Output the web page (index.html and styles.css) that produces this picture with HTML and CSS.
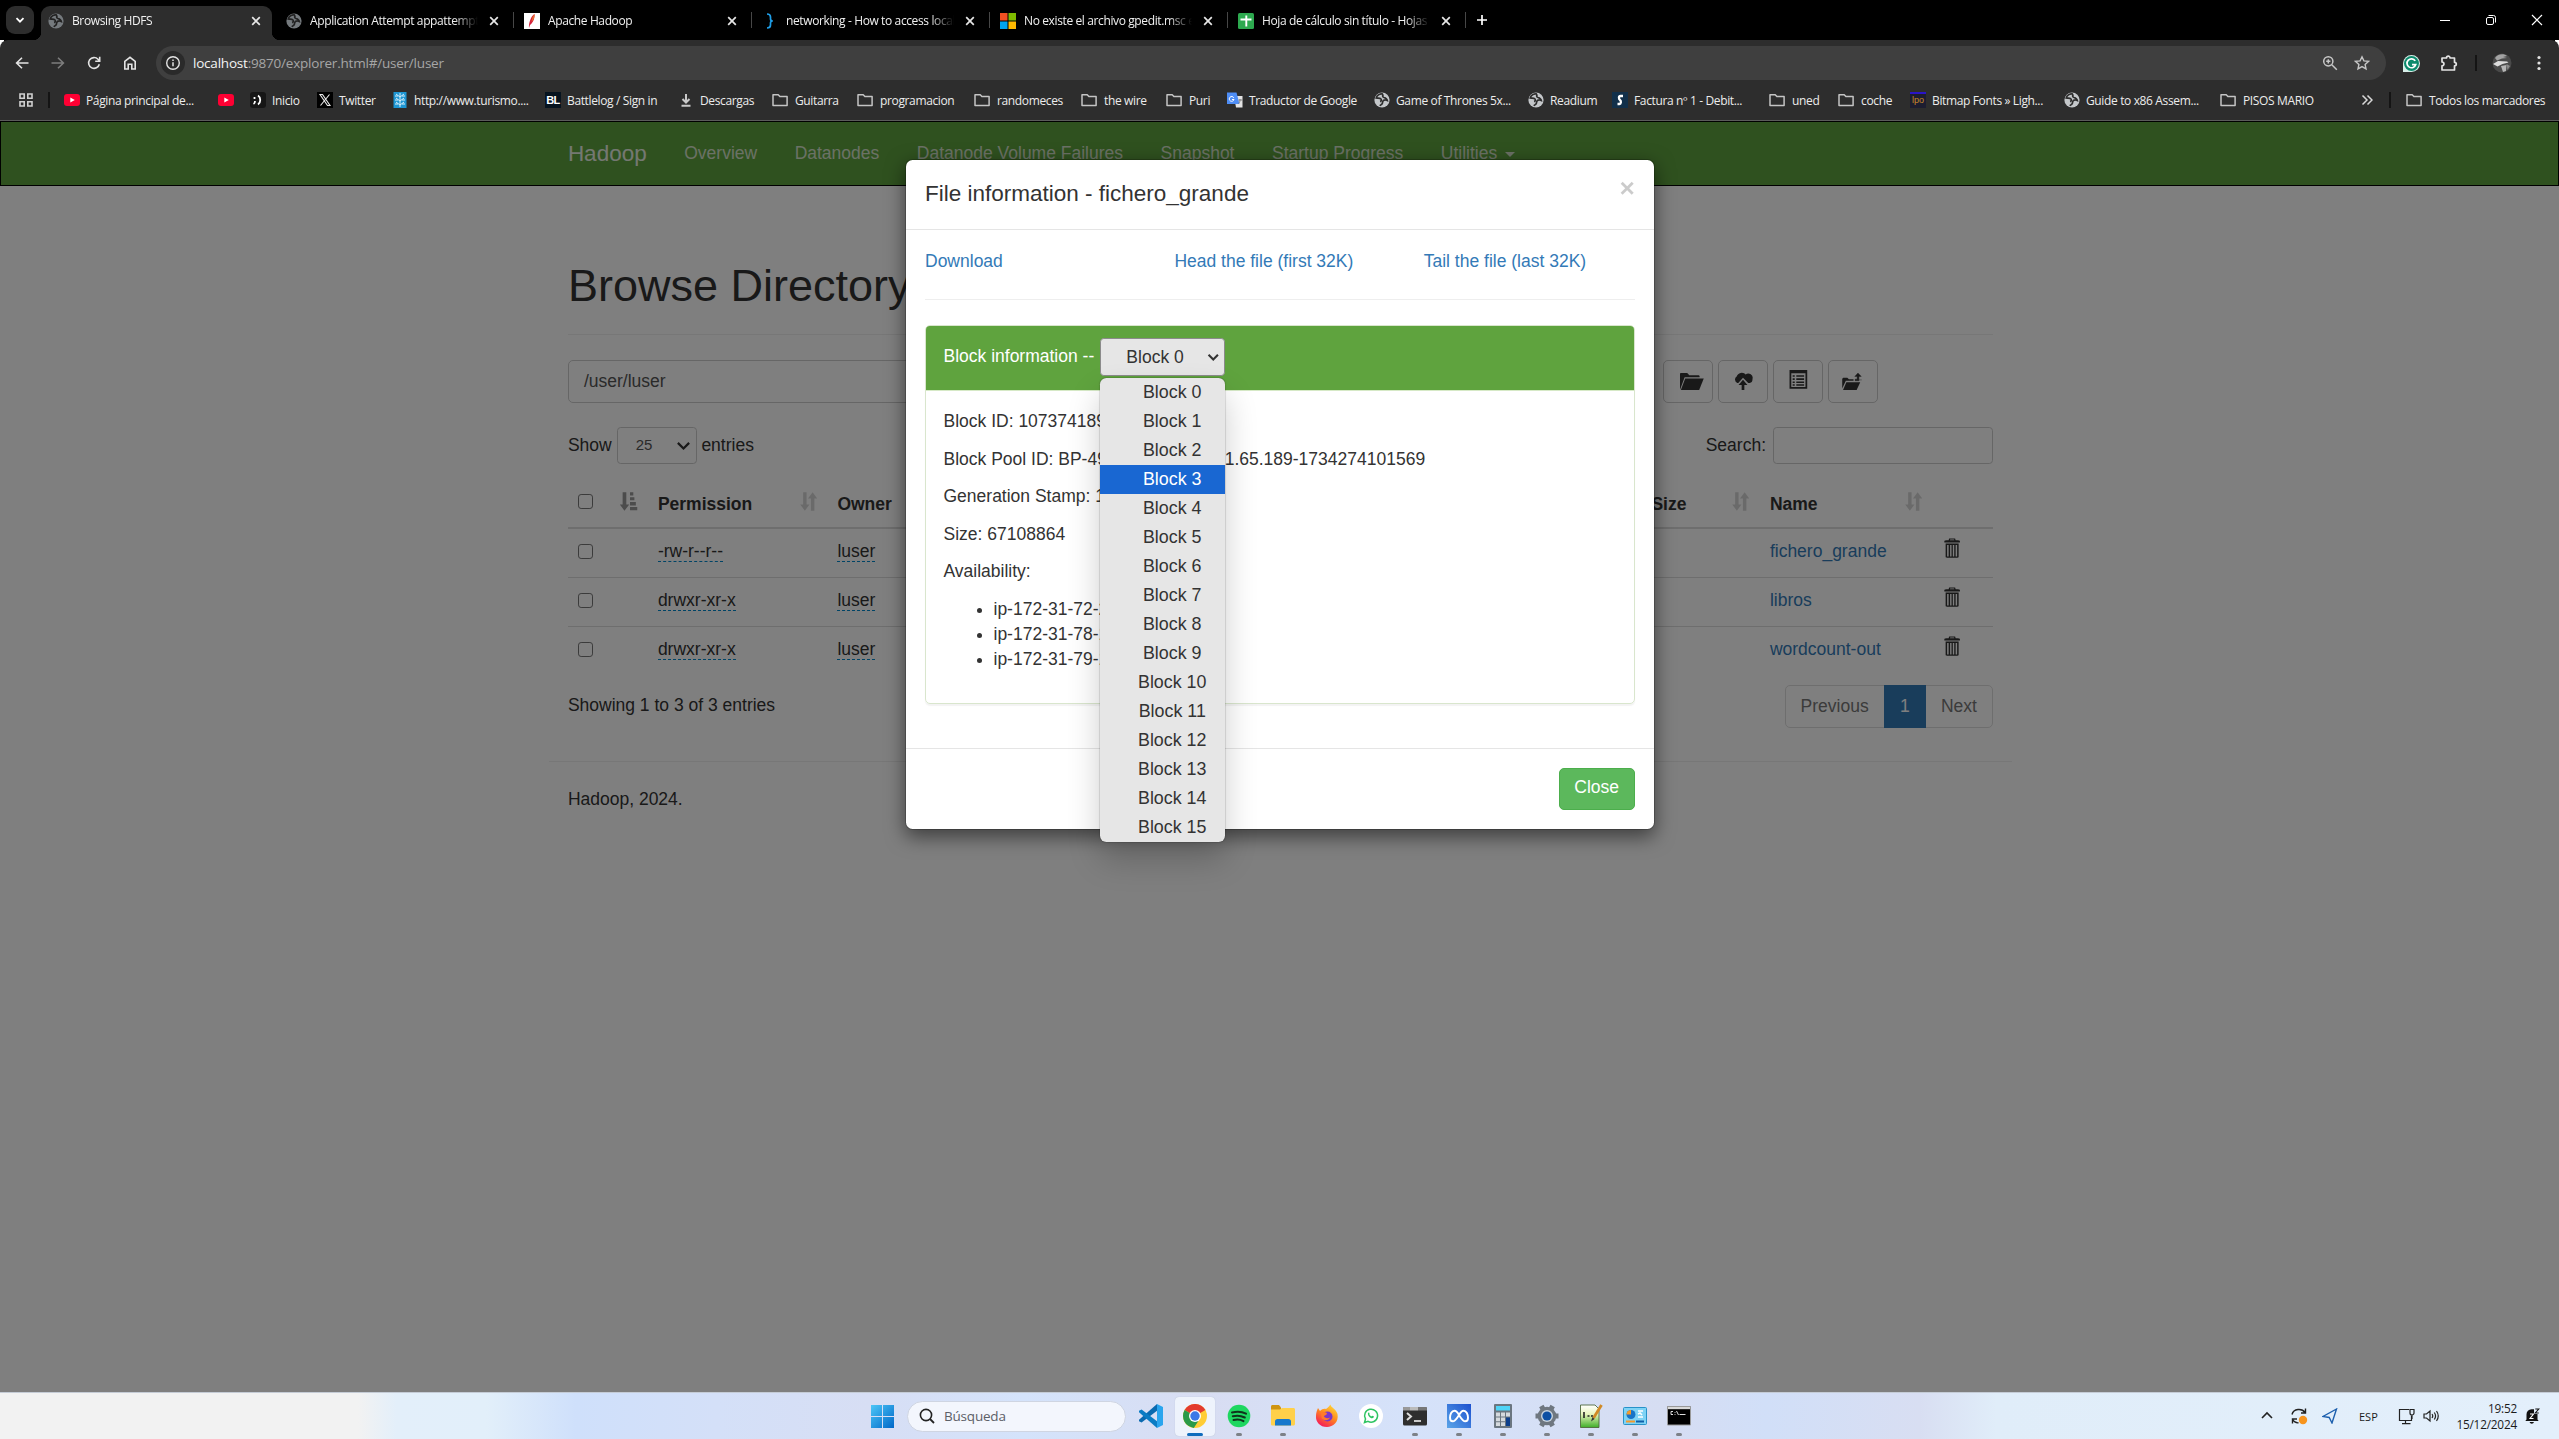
FILE: index.html
```html
<!DOCTYPE html>
<html lang="es">
<head>
<meta charset="utf-8">
<title>Browsing HDFS</title>
<link rel="stylesheet" href="styles.css">
</head>
<body>
<svg class="defs" width="0" height="0">
  <defs>
    <linearGradient id="gWin" x1="0" y1="0" x2="1" y2="1"><stop offset="0" stop-color="#4cc6f7"/><stop offset="1" stop-color="#0067c8"/></linearGradient>
    <linearGradient id="gFire" x1=".9" y1="0" x2=".3" y2="1"><stop offset="0" stop-color="#ffe43c"/><stop offset=".5" stop-color="#ff8a1d"/><stop offset="1" stop-color="#f5195a"/></linearGradient>
    <linearGradient id="gMeta" x1="0" y1="1" x2="1" y2="0"><stop offset="0" stop-color="#5aa4e8"/><stop offset="1" stop-color="#1c50cf"/></linearGradient>
    <linearGradient id="gNote" x1="0" y1="0" x2="0" y2="1"><stop offset="0" stop-color="#fff"/><stop offset=".4" stop-color="#e9f5bd"/><stop offset="1" stop-color="#3fae29"/></linearGradient>
  </defs>
  <symbol id="close" viewBox="0 0 16 16"><path d="M4.2 4.2l7.6 7.6M11.8 4.2l-7.6 7.6" stroke="#e6e6e6" stroke-width="1.7" fill="none"/></symbol>
  <symbol id="globe" viewBox="0 0 16 16"><circle cx="8" cy="8" r="7.6" fill="currentColor"/><path d="M9 2C6 1.500 3 3.200 2.200 6c1.800.4 3.600-.2 4.800 1 .8 1 .2 2.200-.9 2.600M9.500 2.500C8 3.500 8.500 5 10 5.500c1.500.4 3 1.200 3.300 3-1.300-.6-3.300-.6-4.300.5-.7 1-.2 2-1 3-.6.800-1.600 1-2.200 1.800" fill="none" stroke="var(--cut)" stroke-width="1.700"/></symbol>
  <symbol id="folder" viewBox="0 0 16 16"><path d="M1 13.4V2.7h5.2l1.7 1.9h7.2v8.8z" fill="none" stroke="#c4c4c4" stroke-width="1.5" stroke-linejoin="round"/></symbol>
  <symbol id="yt" viewBox="0 0 16 16"><rect y="2" width="16" height="12" rx="3" fill="#f03"/><path d="M6.3 5.5v5L10.8 8z" fill="#fff"/></symbol>
  <symbol id="sort" viewBox="0 0 18 20"><path d="M3.2 0h3.6v12.5h3L5 19 .2 12.5h3zM11.2 19h3.6V6.500h3L13 0 8.200 6.500h3z" fill="currentColor"/></symbol>
  <symbol id="sortasc" viewBox="0 0 18 20"><path d="M2.700 0h3.800v12.500h3L4.600 19-.3 12.500h3zM10.300 0h3.400v3.300h-3.400zM10.300 5h4.500v3.300h-4.500zM10.300 10h6v3.600h-6zM10.300 15.200h7.700v3.300h-7.700z" fill="currentColor"/></symbol>
  <symbol id="trash" viewBox="0 0 16 20"><path d="M.2 3.200C.2 2.500 1 2.200 4.500 2.200L5 .4h6l.5 1.800c3.500 0 4.300.3 4.300 1v1.300H.2zM1.500 5.500h13V18.600c0 .8-.4 1.200-1.200 1.200H2.700c-.8 0-1.200-.4-1.200-1.200zM3 7v11.400h1.500V7zM6 7v11.400h1.400V7zM8.700 7v11.400h1.400V7zM11.500 7v11.400H13V7zM5.800 2.200h4.400l-.3-.8H6.100z" fill="#333" fill-rule="evenodd"/></symbol>
</svg>

<div class="window">
  <header class="tabstrip">
    <div class="tabsearch"><svg width="12" height="12" viewBox="0 0 12 12"><path d="M2.500 4.200L6 7.700l3.500-3.500" fill="none" stroke="#fff" stroke-width="1.800"/></svg></div>
    <div class="tab active"><svg class="fav dimglobe"><use href="#globe"/></svg><span class="ttl">Browsing HDFS</span><svg class="x"><use href="#close"/></svg></div>
    <div class="tab nosep"><svg class="fav dimglobe"><use href="#globe"/></svg><span class="ttl">Application Attempt appattempt_17</span><svg class="x"><use href="#close"/></svg></div>
    <div class="tab"><svg class="fav" viewBox="0 0 16 16"><path d="M0 0h16v16H0z" fill="#fff"/><path d="M5 15C4.500 10 7 3 10.500 1 11 6 8.500 10 6 12z" fill="#d4213d"/><path d="M7.500 9C8 5 9 2.500 10.500 1c.5 3-1 6-3 8z" fill="#e8722c"/></svg><span class="ttl">Apache Hadoop</span><svg class="x"><use href="#close"/></svg></div>
    <div class="tab"><svg class="fav" viewBox="0 0 16 16"><path d="M5 1c3 0 3.500 1 3.500 3v2c0 1.300.8 2 2.300 2-1.500 0-2.300.7-2.300 2v2c0 2-.5 3-3.500 3" fill="none" stroke="#1f9fe8" stroke-width="1.700"/></svg><span class="ttl">networking - How to access localhost</span><svg class="x"><use href="#close"/></svg></div>
    <div class="tab"><svg class="fav" viewBox="0 0 16 16"><path d="M0 0h7.500v7.500H0z" fill="#f25022"/><path d="M8.500 0H16v7.500H8.500z" fill="#7fba00"/><path d="M0 8.500h7.500V16H0z" fill="#00a4ef"/><path d="M8.500 8.500H16V16H8.500z" fill="#ffb900"/></svg><span class="ttl">No existe el archivo gpedit.msc en</span><svg class="x"><use href="#close"/></svg></div>
    <div class="tab"><svg class="fav" viewBox="0 0 16 16"><rect width="16" height="16" rx="1.500" fill="#2da94f"/><path d="M8.300 2.500v11M2.500 6.500h11" stroke="#fff" stroke-width="1.900"/></svg><span class="ttl">Hoja de cálculo sin título - Hojas de</span><svg class="x"><use href="#close"/></svg></div>
    <div class="newtab"><svg width="14" height="14" viewBox="0 0 14 14"><path d="M7 2v10M2 7h10" stroke="#fff" stroke-width="1.700"/></svg></div>
    <div class="winctl">
      <svg width="46" height="40" viewBox="0 0 46 40"><path d="M18 20.500h10" stroke="#fff"/></svg>
      <svg width="46" height="40" viewBox="0 0 46 40"><rect x="18.500" y="17.500" width="7" height="7" rx="1.500" fill="none" stroke="#fff"/><path d="M20.500 15.500h5a2 2 0 0 1 2 2v5" fill="none" stroke="#fff"/></svg>
      <svg width="46" height="40" viewBox="0 0 46 40"><path d="M18 15l10 10M28 15L18 25" stroke="#fff" stroke-width="1.200"/></svg>
    </div>
  </header>

  <div class="toolbar">
    <svg class="nav" viewBox="0 0 16 16"><path d="M14.500 8H3M8 2.700L2.600 8 8 13.300" fill="none" stroke="#e3e3e3" stroke-width="1.600"/></svg>
    <svg class="nav" viewBox="0 0 16 16"><path d="M1.500 8H13M8 2.700L13.400 8 8 13.300" fill="none" stroke="#7d7d7d" stroke-width="1.600"/></svg>
    <svg class="nav" viewBox="0 0 16 16"><path d="M13.300 9.200A5.400 5.400 0 1 1 12 4.300L13.500 6M13.700 1.800v4.500H9.200" fill="none" stroke="#e3e3e3" stroke-width="1.600"/></svg>
    <svg class="nav" viewBox="0 0 16 16"><path d="M2.800 14V6.500L8 2.300l5.200 4.200V14H9.800V9.300H6.200V14z" fill="none" stroke="#e3e3e3" stroke-width="1.600"/></svg>
    <div class="omnibox">
      <span class="siteinfo"><svg width="16" height="16" viewBox="0 0 16 16"><circle cx="8" cy="8" r="6.300" fill="none" stroke="#e3e3e3" stroke-width="1.400"/><path d="M8 7.200v4.100M8 4.600v1.500" stroke="#e3e3e3" stroke-width="1.500"/></svg></span>
      <span class="url"><b>localhost</b>:9870/explorer.html#/user/luser</span>
      <svg class="oicon" viewBox="0 0 16 16"><circle cx="6.300" cy="6.300" r="4.600" fill="none" stroke="#c7c7c7" stroke-width="1.500"/><path d="M9.800 9.800l5 5M6.300 4.200v4.200M4.200 6.300h4.200" stroke="#c7c7c7" stroke-width="1.500"/></svg>
      <svg class="oicon" viewBox="0 0 16 16"><path d="M8 1.800l1.900 4.100 4.500.5-3.300 3 .9 4.500L8 11.600l-4 2.300.9-4.500-3.300-3 4.500-.5z" fill="none" stroke="#c7c7c7" stroke-width="1.400"/></svg>
    </div>
    <svg class="gram" viewBox="0 0 16 16"><path d="M8 0a8 8 0 1 1 0 16H0V8a8 8 0 0 1 8-8z" fill="#d8efe9"/><circle cx="8" cy="8" r="7" fill="#0c8a6c"/><path d="M11.500 5.500A4.200 4.200 0 1 0 12 9H8.500" fill="none" stroke="#fff" stroke-width="1.600"/></svg>
    <svg class="puzzle" viewBox="0 0 18 18"><path d="M2 4h4.500a1.800 1.800 0 0 1 3.600 0H14.500v4.300a1.800 1.800 0 0 1 0 3.600V16H2v-4.200c2.600 0 2.600-3.800 0-3.800z" fill="none" stroke="#e3e3e3" stroke-width="1.700" stroke-linejoin="round"/></svg>
    <i class="vline"></i>
    <svg class="avatar" viewBox="0 0 20 20"><circle cx="10" cy="10" r="9.500" fill="#4a4a4a"/><path d="M3 5c2-4 9-5 12-2l-4 1 4 1-5 .5-5 2z" fill="#a3a3a3"/><path d="M1 11l5-3 9 .5 1.500 1-6 1.500-5 2.500z" fill="#dcdcdc"/><path d="M9 13l2 6 3-1 .5-6z" fill="#b5b5b5"/><path d="M14.500 11l1 6 2.500-4z" fill="#8a8a8a"/></svg>
    <svg class="dots" viewBox="0 0 4 16"><circle cx="2" cy="2.500" r="1.600" fill="#e3e3e3"/><circle cx="2" cy="8" r="1.600" fill="#e3e3e3"/><circle cx="2" cy="13.500" r="1.600" fill="#e3e3e3"/></svg>
  </div>

  <nav class="bookmarks">
    <svg class="apps" viewBox="0 0 14 14"><path d="M1 1h4.200v4.200H1zM8.800 1H13v4.200H8.800zM1 8.800h4.200V13H1zM8.800 8.800H13V13H8.800z" fill="none" stroke="#d0d0d0" stroke-width="1.600"/></svg>
    <i class="vline"></i>
    <a style="width:154px"><svg><use href="#yt"/></svg>Página principal de...</a>
    <a style="width:32px"><svg><use href="#yt"/></svg></a>
    <a style="width:67px"><svg viewBox="0 0 16 16"><rect width="16" height="16" rx="3" fill="#161616"/><path d="M4.500 5v2M5 9c0 2-.5 2.500-1.500 3M8 3.500c3 2 3 7 0 9" stroke="#fff" stroke-width="1.800" fill="none"/></svg>Inicio</a>
    <a style="width:75px"><svg viewBox="0 0 16 16"><path d="M0 0h16v16H0z" fill="#000"/><path d="M3 2.500h2.500l7.500 11h-2.500zM12.500 2.500L3.500 13.500" fill="none" stroke="#e8e8e8" stroke-width="1.100"/></svg>Twitter</a>
    <a style="width:153px"><svg viewBox="0 0 16 16"><path d="M1.500 0h13v16h-13z" fill="#1e96d3"/><path d="M8 1v14M3 4h3M10 4h3M3 8h3M10 8h3M3 12h3M10 12h3M4 2l4 3 4-3M4 6l4 3 4-3M4 10l4 3 4-3" stroke="#d5effb" stroke-width="1" fill="none"/></svg>http://www.turismo....</a>
    <a style="width:133px"><span class="bl">BL</span>Battlelog / Sign in</a>
    <a style="width:94px"><svg viewBox="0 0 16 16"><path d="M8 2v8M4.500 7L8 10.500 11.500 7M3.500 13.700h9" fill="none" stroke="#c9c9c9" stroke-width="2"/></svg>Descargas</a>
    <a class="f" style="width:85px"><svg><use href="#folder"/></svg>Guitarra</a>
    <a class="f" style="width:117px"><svg><use href="#folder"/></svg>programacion</a>
    <a class="f" style="width:107px"><svg><use href="#folder"/></svg>randomeces</a>
    <a class="f" style="width:85px"><svg><use href="#folder"/></svg>the wire</a>
    <a class="f" style="width:61px"><svg><use href="#folder"/></svg>Puri</a>
    <a style="width:147px"><svg viewBox="0 0 16 16"><path d="M7 4h8.500v11.500H9z" fill="#e3e3e3"/><path d="M0 .5h9.500l3 11.500H0z" fill="#4e8df5"/><path d="M6.800 5.800A2.400 2.400 0 1 0 7 7.500H5" stroke="#fff" fill="none"/><path d="M11.500 8h4M13 7v1c0 2-1 3-1.500 3.500" stroke="#777" stroke-width=".9" fill="none"/></svg>Traductor de Google</a>
    <a style="width:154px"><svg class="ltglobe"><use href="#globe"/></svg>Game of Thrones 5x...</a>
    <a style="width:84px"><svg class="ltglobe"><use href="#globe"/></svg>Readium</a>
    <a style="width:157px"><svg viewBox="0 0 16 16"><path d="M0 0h16v16H0z" fill="#12304a"/><path d="M11 4H8.500C6.500 4 6.500 7 8 8s1 4-.5 4H5.500" fill="none" stroke="#fff" stroke-width="2.300"/></svg>Factura nº 1 - Debit...</a>
    <a class="f" style="width:69px"><svg><use href="#folder"/></svg>uned</a>
    <a class="f" style="width:72px"><svg><use href="#folder"/></svg>coche</a>
    <a style="width:154px"><span class="lpo">lpo</span>Bitmap Fonts » Ligh...</a>
    <a style="width:156px"><svg class="ltglobe"><use href="#globe"/></svg>Guide to x86 Assem...</a>
    <a class="f" style="width:140px"><svg><use href="#folder"/></svg>PISOS MARIO</a>
    <svg class="more" viewBox="0 0 12 12"><path d="M1.500 1.500L6 6l-4.500 4.500M6.500 1.500L11 6l-4.500 4.500" fill="none" stroke="#d8d8d8" stroke-width="1.500"/></svg>
    <i class="vline"></i>
    <a class="f"><svg><use href="#folder"/></svg>Todos los marcadores</a>
  </nav>

  <main class="viewport">
    <div class="page">
      <nav class="navbar"><div class="container navrow">
        <a class="brand">Hadoop</a><a>Overview</a><a>Datanodes</a><a>Datanode Volume Failures</a><a>Snapshot</a><a>Startup Progress</a><a>Utilities <i class="caret"></i></a>
      </div></nav>
      <div class="container">
        <div class="page-header"><h1>Browse Directory</h1></div>
        <div class="pathrow">
          <div class="path">/user/luser</div>
          <div class="btns">
            <button class="b1"><svg width="19" height="15" viewBox="0 0 23 18"><path d="M0 17V1.800C0 1 .5.900 1 .900L7 .900 9 3h8.500C18.500 3 19 3.500 19 4.300V5H4.500z" fill="#333"/><path d="M5 6.200h18L18.500 17.500H.8z" fill="#333"/></svg></button>
            <button class="b2"><svg width="16" height="15" viewBox="0 0 19 18"><path d="M4 10.500A3.600 3.600 0 0 1 3.400 4.200 5.200 5.200 0 0 1 12 2.300a4.200 4.200 0 0 1 6.600 4.500c.2 2-.9 3.700-2.600 3.700h-1.500L9.500 5.500 5 10.500z" fill="#333"/><path d="M9.500 7.500l4.300 5h-3V18H8.200v-5.500h-3z" fill="#333"/></svg></button>
            <button class="b3"><svg width="15" height="15" viewBox="0 0 17 18"><path d="M0 0h17v18H0zM1.700 3.200v13.100h13.600V3.200zM3 5h2v1.500H3zM6.500 5h7.500v1.500H6.500zM3 8h2v1.500H3zM6.500 8h7.500v1.500H6.500zM3 11h2v1.500H3zM6.500 11h7.500v1.500H6.500zM3 13.700h2v1.300H3zM6.500 13.700h7.500v1.300H6.500z" fill="#333" fill-rule="evenodd"/></svg></button>
            <button class="b4"><svg width="16" height="14" viewBox="0 0 19 17"><path d="M0 15V5.500L1 4.500h4L6.500 6H11v1.500H3.500zM4 9h13.500L14 16.500H.8z" fill="#333"/><path d="M15.300 0L18.500 3.300H16.200V7.500H12.500V6h2V3.300h-2.300zM16 6.700h3" fill="#333" stroke="#333" stroke-width=".4"/></svg></button>
          </div>
        </div>
        <div class="controls">
          <div class="left">Show <span class="sel25">25<svg width="12" height="8" viewBox="0 0 12 8"><path d="M1.500 1.500L6 6l4.500-4.500" fill="none" stroke="#333" stroke-width="1.800"/></svg></span> entries</div>
          <div class="right">Search:<input class="search"></div>
        </div>
        <table class="files">
          <colgroup><col class="c1"><col class="c2"><col class="c3"><col class="c4"><col class="c5"><col></colgroup>
          <thead><tr>
            <th><input type="checkbox"><svg class="sic on"><use href="#sortasc"/></svg></th>
            <th>Permission<svg class="sic"><use href="#sort"/></svg></th>
            <th>Owner</th>
            <th>Block Size<svg class="sic"><use href="#sort"/></svg></th>
            <th>Name<svg class="sic"><use href="#sort"/></svg></th>
            <th></th>
          </tr></thead>
          <tbody>
            <tr><td><input type="checkbox"></td><td><span class="ed">-rw-r--r--</span></td><td><span class="ed">luser</span></td><td></td><td><a>fichero_grande</a></td><td><svg class="tr"><use href="#trash"/></svg></td></tr>
            <tr><td><input type="checkbox"></td><td><span class="ed">drwxr-xr-x</span></td><td><span class="ed">luser</span></td><td></td><td><a>libros</a></td><td><svg class="tr"><use href="#trash"/></svg></td></tr>
            <tr><td><input type="checkbox"></td><td><span class="ed">drwxr-xr-x</span></td><td><span class="ed">luser</span></td><td></td><td><a>wordcount-out</a></td><td><svg class="tr"><use href="#trash"/></svg></td></tr>
          </tbody>
        </table>
        <div class="summary">
          <div>Showing 1 to 3 of 3 entries</div>
          <div class="pager"><span>Previous</span><span class="cur">1</span><span>Next</span></div>
        </div>
        <hr class="foot">
        <p class="copy">Hadoop, 2024.</p>
      </div>
    </div>
    <div class="backdrop"></div>
    <div class="modal-layer">
      <section class="modal">
        <div class="mhead"><h4>File information - fichero_grande</h4><span class="mclose">×</span></div>
        <div class="mbody">
          <div class="links"><a>Download</a><a>Head the file (first 32K)</a><a>Tail the file (last 32K)</a></div>
          <hr>
          <div class="panel">
            <div class="phead"><span class="ptitle">Block information -- </span><div class="selwrap">
              <div class="blocksel">Block 0<svg width="10" height="7" viewBox="0 0 12 8"><path d="M1.500 1.500L6 6l4.500-4.500" fill="none" stroke="#333" stroke-width="2"/></svg></div>
              <ul class="popup"><li>Block 0</li><li>Block 1</li><li>Block 2</li><li class="hot">Block 3</li><li>Block 4</li><li>Block 5</li><li>Block 6</li><li>Block 7</li><li>Block 8</li><li>Block 9</li><li>Block 10</li><li>Block 11</li><li>Block 12</li><li>Block 13</li><li>Block 14</li><li>Block 15</li></ul>
            </div></div>
            <div class="pbody">
              <p>Block ID: 1073741891</p>
              <p>Block Pool ID: BP-491826350-172.31.65.189-1734274101569</p>
              <p>Generation Stamp: 1067</p>
              <p>Size: 67108864</p>
              <p>Availability:</p>
              <ul><li>ip-172-31-72-214</li><li>ip-172-31-78-106</li><li>ip-172-31-79-142</li></ul>
            </div>
          </div>
        </div>
        <div class="mfoot"><button class="ok">Close</button></div>
      </section>
    </div>
  </main>

  <footer class="taskbar">
    <svg class="start" viewBox="0 0 23 23"><path d="M0 0h11v11H0zM12 0h11v11H12zM0 12h11v11H0zM12 12h11v11H12z" fill="url(#gWin)"/></svg>
    <div class="tsearch"><svg width="16" height="16" viewBox="0 0 16 16"><circle cx="7" cy="7" r="5.600" fill="none" stroke="#222" stroke-width="1.600"/><path d="M11 11l4 4" stroke="#222" stroke-width="1.800"/></svg>Búsqueda</div>
    <div class="apps-row">
      <div class="app"><svg viewBox="0 0 24 24"><path d="M18 0l6 3v18l-6 3z" fill="#2aa5ee"/><path d="M18 0v6.700L2.600 18.600 0 17.200v-1.500z" fill="#0a6ab0"/><path d="M0 8.300V6.800l2.600-1.400L18 17.300V24z" fill="#0a7cc4"/></svg></div>
      <div class="app focus"><svg viewBox="0 0 24 24"><circle cx="12" cy="12" r="12" fill="#ffcd35"/><path d="M12 12L1.600 6A12 12 0 0 1 22.400 6z" fill="#e33b2e"/><path d="M12 12h0L1.600 6a12 12 0 0 0 9.200 17.900L17 14.500z" fill="#2a9a48"/><circle cx="12" cy="12" r="6" fill="#fff"/><circle cx="12" cy="12" r="4.700" fill="#3b78e7"/></svg><i></i></div>
      <div class="app run"><svg viewBox="0 0 24 24"><circle cx="12" cy="12" r="11.300" fill="#1ed760"/><path d="M5 8.500c5-1.400 10-1 14 1.200M5.800 12.300c4-1.100 8-.8 12 1.200M6.500 16c3.500-.9 7-.6 10 1.100" fill="none" stroke="#10331c" stroke-width="2" stroke-linecap="round"/></svg><i></i></div>
      <div class="app run"><svg viewBox="0 0 24 24"><path d="M0 2.500C0 1.700.6 1 1.500 1H8l2 2.500v4H0z" fill="#cf9410"/><path d="M0 5.500h9L11 4h11.500c.8 0 1.500.5 1.500 1.500V20c0 .8-.6 1.500-1.500 1.500h-21C.6 21.500 0 21 0 20z" fill="#ffd04a"/><path d="M4 21.500v-4c0-1.500 1-2.500 2.500-2.500h11c1.500 0 2.500 1 2.500 2.500v4z" fill="#1778cc"/></svg><i></i></div>
      <div class="app"><svg viewBox="0 0 24 24"><path d="M3 4l2 3c2-2 4-2.500 6-2 2-1 3-3 4.500-4.500C16 4 21 4.500 22.500 10 24 18 18 23 12 23 5 23 .5 18 1 12c0-3 .8-5 2-8z" fill="url(#gFire)"/><circle cx="12.500" cy="12.500" r="5" fill="#7a36c9"/><path d="M6 9c2-1.500 4-1 6 0 0 2-2 2-3 3 0 2 4 3 6 1.500C13.500 17 8 17 6.500 13.500z" fill="#ff7a2a"/></svg></div>
      <div class="app"><svg viewBox="0 0 24 24"><circle cx="12" cy="12" r="12" fill="#fff"/><path d="M5.500 18.500l1-3.500a6.500 6.500 0 1 1 2.500 2.400z" fill="none" stroke="#2fc462" stroke-width="1.500"/><path d="M9 9c.5-1 1.500-.5 1.500.8 0 .7-.4.900 1.700 2.700 1-.9 1.200-.9 2.800.1-.5 2.600-3.500 1.900-5-.2C9 11 8.700 10 9 9z" fill="#2fc462"/></svg></div>
      <div class="app run"><svg viewBox="0 0 24 24"><rect y="3" width="24" height="18.500" rx="1.500" fill="#2e2e2e"/><path d="M0 6.500V4.500C0 3.500.6 3 1.500 3H7v3.500z" fill="#999"/><path d="M7 3h8v3.500H7z" fill="#bbb"/><path d="M15 3h7.500c.8 0 1.500.5 1.500 1.500v2h-9z" fill="#777"/><path d="M4 9l4 3.500L4 16" fill="none" stroke="#ddd" stroke-width="2"/><path d="M11 17h7" stroke="#fff" stroke-width="1.500"/></svg><i></i></div>
      <div class="app run"><svg viewBox="0 0 24 24"><path d="M0 0h24v24H0z" fill="url(#gMeta)"/><path d="M12 11C10.500 8 9.500 6.700 7.500 6.700c-3 0-4.500 4-4.500 7 0 2.300 1 3.600 2.800 3.600 2.700 0 4-3 6.200-6.300 1.500-2.800 2.500-4.300 4.500-4.300 3 0 4.500 4 4.500 7 0 2.300-1 3.600-2.800 3.600-2.700 0-4-3-6.200-6.300z" fill="none" stroke="#fff" stroke-width="1.900"/></svg><i></i></div>
      <div class="app run"><svg viewBox="0 0 24 24"><rect x="3" width="18" height="24" rx="1" fill="#6b7680"/><path d="M5 2h14v4.500H5z" fill="#4fd4f7"/><path d="M5 8.500h4v4H5zM10 8.500h4v4h-4zM15 8.500h4v4h-4zM5 13.500h4v3.800H5zM10 13.500h4v3.800h-4zM5 18.300h4v3.700H5zM10 18.300h4v3.700h-4z" fill="#d5dade"/><path d="M15 13.500h4V22h-4z" fill="#0d3f8c"/></svg><i></i></div>
      <div class="app run"><svg viewBox="0 0 24 24"><circle cx="12" cy="12" r="9.300" fill="#6f7780"/><path d="M6.300 2.100l11.400 19.800M17.700 2.100L6.300 21.900M.5 12h23" stroke="#6f7780" stroke-width="5"/><circle cx="12" cy="12" r="6" fill="#c8d3de"/><circle cx="12" cy="12" r="4.600" fill="#0d4fa3"/></svg><i></i></div>
      <div class="app run"><svg viewBox="0 0 24 24"><path d="M1.500 1H16l4 4v18.500H1.500z" fill="url(#gNote)" stroke="#4f6a3c" stroke-width=".9"/><path d="M5 8v6M8.500 12h2M12 12h2" stroke="#222" stroke-width="1.600"/><path d="M22.500 1L14.500 14" stroke="#d18a26" stroke-width="2.800"/><path d="M13.500 13l-1.500 4.500 3.500-2.500z" fill="#333"/></svg><i></i></div>
      <div class="app run"><svg viewBox="0 0 24 24"><rect x=".5" y="3.500" width="23" height="17" rx="1" fill="#7fd3f5" stroke="#2792c9"/><circle cx="8" cy="10.500" r="4.500" fill="#1974c8"/><path d="M8 10.500V6a4.500 4.500 0 0 0-4.500 4.500z" fill="#f49a2c"/><path d="M15 7h5M15 10l2-1 2 2M15 13h5" stroke="#fff" stroke-width="1.500" fill="none"/><path d="M3 17.500h9" stroke="#f49a2c" stroke-width="2"/><path d="M13 17.500h8" stroke="#0f5fa8" stroke-width="2"/></svg><i></i></div>
      <div class="app run"><svg viewBox="0 0 24 24"><path d="M.5 2.500h23V21H.5z" fill="#000" stroke="#999"/><path d="M1 3h22v2.200H1z" fill="#d9d9d9"/><path d="M6 7.500H4v3h2M8 8v.8M8 10v.8M9.500 7l2 4M12.500 10.500h6" stroke="#ddd" fill="none"/></svg><i></i></div>
    </div>
    <div class="tray">
      <svg class="t1" width="14" height="14" viewBox="0 0 14 14"><path d="M2 9l5-5 5 5" fill="none" stroke="#222" stroke-width="1.600"/></svg>
      <svg class="t2" width="18" height="18" viewBox="0 0 18 18"><path d="M2 7.500C3.500 1.500 12 1 15 5.500M15.500 1.500V6h-4.500M2.500 16.500V12H7M2.500 12.500c1.500 2.500 4 3.500 6 3.300" fill="none" stroke="#222" stroke-width="1.400"/><circle cx="13" cy="13" r="4.200" fill="#f7941d"/></svg>
      <svg class="t3" width="16" height="16" viewBox="0 0 16 16"><path d="M14.500 1L1 8.500l6.200 1L10 15z" fill="none" stroke="#1c5fae" stroke-width="1.400"/></svg>
      <span class="lang">ESP</span>
      <svg class="t4" width="17" height="17" viewBox="0 0 17 17"><path d="M11 1.500H1.500v11h12V8M7.500 12.500v3M4 15.700h8.500M12 1.500h4V5a2 2 0 0 1-4 0zM14 7v4" fill="none" stroke="#222" stroke-width="1.200"/></svg>
      <svg class="t5" width="17" height="14" viewBox="0 0 17 14"><path d="M1 5v4h2.500L7 12V2L3.500 5zM9 5q1.500 2 0 4M11.300 3.500q2.500 3.500 0 7M13.500 2q3.500 5 0 10" fill="none" stroke="#222" stroke-width="1.200"/></svg>
      <div class="clock"><span>19:52</span><span>15/12/2024</span></div>
      <svg class="t6" width="15" height="16" viewBox="0 0 15 16"><path d="M1.500 11.500V6.500A5 5 0 0 1 6.500 1.300h2.500V6h3.500v5.500l1.200 1.500H.3zM4.500 14h4.500q-.5 1.700-2.200 1.700T4.500 14z" fill="#111"/><path d="M5 6h3.500L5 10.500h3.500" fill="none" stroke="#fff" stroke-width="1.100"/><path d="M10.300 1h3.500l-3.500 4h3.500" fill="none" stroke="#111" stroke-width="1.100"/></svg>
    </div>
  </footer>
</div>
</body>
</html>
```
FILE: styles.css
```css
* { box-sizing: border-box; }
html, body { margin: 0; height: 100%; }
body { font-family: "Open Sans", "Noto Sans", sans-serif; background: #fff; overflow: hidden; }
.defs { position: absolute; }
.window { display: flex; flex-direction: column; width: 2559px; height: 1439px; }

/* tab strip */
.tabstrip { display: flex; height: 40px; background: #000; padding-left: 6px; align-items: flex-end; flex: none; }
.tabsearch { width: 28px; height: 28px; margin: 0 7px 6px 0; border-radius: 9px; background: #2d2d2d; display: flex; align-items: center; justify-content: center; }
.tab { position: relative; width: 238px; height: 34px; display: flex; align-items: center; padding: 0 15px 5px 7px; font-size: 12px; color: #f1f1f1; }
.tab.active { width: 231px; margin-right: 7px; background: #2d2d2d; border-radius: 9px 9px 0 0; padding-right: 8px; }
.tab.active::before, .tab.active::after { content: ""; position: absolute; bottom: 0; width: 8px; height: 8px; }
.tab.active::before { left: -8px; background: radial-gradient(circle at 0 0, transparent 8px, #2d2d2d 8.5px); }
.tab.active::after { right: -8px; background: radial-gradient(circle at 100% 0, transparent 8px, #2d2d2d 8.5px); }
.tab:not(.active):not(.nosep)::before { content: ""; position: absolute; left: -4px; top: 6px; width: 1px; height: 16px; background: #474747; }
.fav { width: 16px; height: 16px; flex: none; margin-right: 8px; }
.dimglobe { color: #757a7e; --cut: #222; }
.ltglobe { color: #c4c7ca; --cut: #2d2d2d; }
.ttl { flex: 1; white-space: nowrap; overflow: hidden; letter-spacing: -0.38px; line-height: 18px; mask-image: linear-gradient(90deg, #000 calc(100% - 24px), transparent); }
.tab .x { width: 16px; height: 16px; flex: none; margin-left: 8px; }
.newtab { width: 36px; height: 28px; margin-bottom: 6px; display: flex; align-items: center; padding-left: 6px; position: relative; }
.newtab::before { content: ""; position: absolute; left: -4px; top: 6px; width: 1px; height: 16px; background: #474747; }
.winctl { margin-left: auto; display: flex; height: 40px; }
.winctl svg:last-child { margin-right: -1px; }

/* toolbar */
.toolbar { display: flex; align-items: center; height: 40px; flex: none; background: #2d2d2d; padding: 6px 0 0 14px; border-radius: 8px 8px 0 0; box-shadow: 0 -8px 0 -4px #000; }
.nav { width: 16px; height: 16px; margin-right: 20px; flex: none; }
.omnibox { flex: none; width: 2230px; height: 34px; margin-left: -2px; border-radius: 17px; background: #3f3f3f; display: flex; align-items: center; padding: 0 16px 0 5px; }
.siteinfo { width: 24px; height: 24px; border-radius: 50%; background: #2a2a2a; display: flex; align-items: center; justify-content: center; margin-right: 8px; }
.url { flex: 1; font-size: 13.5px; letter-spacing: -0.21px; color: #a6a6a6; padding-bottom: 1px; }
.url b { font-weight: 400; color: #f4f4f4; }
.oicon { width: 16px; height: 16px; margin-left: 16px; flex: none; }
.gram { width: 17px; height: 17px; margin-left: 17px; flex: none; }
.puzzle { width: 18px; height: 18px; margin-left: 20px; flex: none; }
.vline { width: 2px; height: 16px; background: #141414; flex: none; }
.toolbar .vline { margin-left: 17px; }
.avatar { width: 20px; height: 20px; margin-left: 15px; flex: none; }
.dots { width: 4px; height: 16px; margin-left: 25px; flex: none; }

/* bookmarks */
.bookmarks { display: flex; align-items: center; height: 41px; flex: none; background: #2d2d2d; border-bottom: 1px solid #5b5b5b; padding-left: 19px; color: #ececec; }
.apps { width: 14px; height: 14px; margin-right: 15px; flex: none; }
.bookmarks .vline { margin-right: 14px; }
.bookmarks a { display: flex; align-items: center; flex: none; white-space: nowrap; font-size: 12px; letter-spacing: -0.36px; }
.bookmarks a svg { width: 16px; height: 16px; margin-right: 6px; flex: none; }
.bookmarks a.f svg { margin-right: 7px; }
.bookmarks a:last-child { margin-left: 1px; }
.bl { width: 16px; height: 16px; margin-right: 6px; background: #06131f; color: #fff; font: 700 11px/16px "Liberation Sans", sans-serif; text-align: center; letter-spacing: -0.5px; }
.lpo { width: 16px; height: 16px; margin-right: 6px; border-top: 2px solid #2a14c8; color: #c98a2b; font: 9px/13px "Liberation Sans", sans-serif; letter-spacing: 0; text-align: center; background: #1d1d30; }
.more { width: 12px; height: 12px; margin: 0 16px 0 1px; flex: none; }

/* page content, shown at 125% */
.viewport { position: relative; flex: 1; overflow: hidden; background: #fff; font-family: "Liberation Sans", Arial, sans-serif; color: #333; }
.page, .modal-layer { zoom: 1.25; font-size: 14px; line-height: 20px; }
.container { width: 1170px; margin-left: calc(50% - 584.3px); padding: 0 15px; }
.container::before { content: ""; display: table; }
.navbar { border: 1px solid #000; background: #5fa33e; min-height: 52px; margin-bottom: 20px; }
.navrow { display: flex; padding: 0; }
.navrow a { padding: 15px; line-height: 20px; color: #d6e2cc; }
.navrow .brand { font-size: 18px; color: #e9f0e4; }
.caret { display: inline-block; border: 4px solid transparent; border-top-color: #d6e2cc; border-bottom: 0; vertical-align: middle; margin-left: 2px; }
.page-header { padding-bottom: 9px; margin: 40px 0 20px; border-bottom: 1px solid #eee; }
h1 { font-size: 36px; font-weight: 400; line-height: 1.1; margin: 0 0 10px; }
.pathrow { display: flex; justify-content: space-between; }
.path { width: 860px; height: 34px; border: 1px solid #ccc; border-radius: 4px; padding: 6px 12px; color: #555; }
.btns { display: flex; gap: 4px; margin-right: 92px; }
.btns button { width: 40px; height: 34px; padding: 0; border: 1px solid #ccc; border-radius: 4px; background: #fff; display: flex; align-items: center; justify-content: center; }
.btns .b1 { padding: 0 0 1px 6px; }
.btns .b2 { padding-bottom: 1px; }
.btns .b3 { padding: 0 0 3px 1px; }
.btns .b4 { padding: 0 2px 0 0; }
.controls { display: flex; justify-content: space-between; margin-top: 19px; height: 30px; }
.controls .left, .controls .right { white-space: pre; display: flex; line-height: 29.500px; }
.sel25 { display: flex; align-items: center; justify-content: space-between; width: 64px; height: 30px; border: 1px solid #ccc; border-radius: 3px; font-size: 12px; color: #555; padding: 1px 4px 0 14.500px; }
.search { width: 176px; height: 30px; margin-left: 5.500px; border: 1px solid #ccc; border-radius: 3px; background: #fff; padding: 0; }
.files { width: 1140px; table-layout: fixed; border-collapse: separate; border-spacing: 0; margin: 14px 0 8px; }
.c1 { width: 64px; } .c2 { width: 143.6px; } .c3 { width: 609.2px; } .c4 { width: 136.8px; } .c5 { width: 138.4px; }
th, td { padding: 8px; text-align: left; vertical-align: top; height: 39.2px; line-height: 20px; }
th { position: relative; height: 37.6px; border-bottom: 2px solid #ddd; padding-bottom: 6px; white-space: nowrap; }
tr + tr td { border-top: 1px solid #ddd; }
tbody tr:first-child td { height: 38.4px; }
input[type=checkbox] { appearance: none; display: block; width: 12px; height: 12px; margin: 4px 0 0 0; border: 1px solid #767676; border-radius: 2.5px; }
th input[type=checkbox] { margin-top: 1.600px; }
.sic { position: absolute; right: 8px; top: 8px; width: 14px; height: 16px; opacity: .2; color: #333; }
.sic.on { opacity: .5; }
.ed { border-bottom: 1px dashed #08c; }
td a, .links a { color: #337ab7; }
.tr { display: block; width: 13px; height: 16px; margin: -.8px 0 0 1px; }
.summary { display: flex; justify-content: space-between; align-items: flex-start; line-height: 33.500px; height: 61px; }
.pager { display: flex; border: 1px solid #ddd; border-radius: 4px; height: 34px; margin-top: .6px; line-height: 32px; color: #777; }
.pager span { padding: 0 12px; }
.pager .cur { background: #337ab7; color: #fff; margin: -1px 0; padding: 1px 13px; }
hr { border: 0; border-top: 1px solid #eee; margin: 20px 0; }
.foot { margin: 0 -15px 20px; }
.copy { margin: 0; }

/* dialog */
.backdrop { position: absolute; inset: 0; background: rgba(0,0,0,.5); }
.modal-layer { position: absolute; inset: 0; }
.modal { width: 600px; margin: 30px auto; border: 1px solid rgba(0,0,0,.2); border-radius: 6px; background: #fff; background-clip: padding-box; box-shadow: 0 5px 15px rgba(0,0,0,.5); }
.mhead { display: flex; justify-content: space-between; padding: 14.600px 15px 15.400px 15.600px; border-bottom: 1px solid #e5e5e5; }
h4 { margin: 0; font-size: 18px; font-weight: 400; line-height: 25.7px; }
.mclose { font-size: 21px; font-weight: 700; line-height: 21px; margin-top: -2.400px; opacity: .2; color: #000; }
.mbody { padding: 15px 15px 15px 15.600px; }
.links { display: flex; margin-right: -15px; }
.links a { width: 199.5px; flex: none; }
.links a:last-child { width: 180px; }
.panel { border: 1px solid #d9e6cd; border-radius: 4px; margin-bottom: 20px; box-shadow: 0 1px 1px rgba(0,0,0,.05); }
.phead { display: flex; background: #5fa33e; color: #fff; padding: 10px 14px 9px; height: 51.700px; border-bottom: 1px solid #d6e9c6; border-radius: 3px 3px 0 0; line-height: 29px; }
.ptitle { white-space: pre; }
.selwrap { position: relative; color: #333; margin-left: 1px; }
.blocksel { width: 100px; height: 30px; background: #e6e6e6; border: 1px solid #8b8b8b; border-radius: 3px; line-height: 29px; padding: 0 4px 0 20px; display: flex; justify-content: space-between; align-items: center; }
.popup { position: absolute; z-index: 5; left: 0; top: 31.4px; width: 100px; margin: 0; padding: 0; list-style: none; background: #e6e6e6; border-radius: 5px; box-shadow: 0 0 1px rgba(0,0,0,.7), 0 14px 26px rgba(0,0,0,.2); overflow: hidden; }
.popup li { height: 23.2px; line-height: 23.2px; font-size: 14.3px; text-align: center; padding-left: 15px; }
.popup .hot { background: #1967d2; color: #fff; }
.pbody { padding: 15px 14px; }
.pbody p { margin: 0 0 10px; }
.pbody ul { margin: 0 0 10px; padding-left: 40px; }
.mfoot { padding: 15px; border-top: 1px solid #e5e5e5; display: flex; justify-content: flex-end; }
.ok { font: 14px/20px "Liberation Sans", Arial, sans-serif; color: #fff; background: #5cb85c; border: 1px solid #4cae4c; border-radius: 4px; height: 34px; width: 61px; padding: 0 0 1.500px; }

/* taskbar */
.taskbar { position: relative; display: flex; align-items: center; height: 47px; flex: none; background: linear-gradient(90deg, #f2f2f2 0, #f2f2f2 14%, #e3effa 15.5%, #e2effa 19%, #cfe0fb 22.5%, #d4e0f8 28%, #d7def4 34%, #d4e3fb 40%, #d8ddf2 47%, #d5e2fa 55%, #d6ddf2 65%, #d1dff8 69%, #d8def2 75%, #e0edf9 78%, #e3effb 100%); border-top: 1px solid #c5ccd6; padding-left: 871px; }
.start { width: 23px; height: 23px; flex: none; }
.tsearch { display: flex; align-items: center; gap: 9px; width: 219px; height: 31px; margin-left: 13px; padding-left: 11px; border-radius: 16px; background: #f3f6fd; border: 1px solid #cfd5e2; font-size: 13.5px; letter-spacing: -.2px; color: #5c6067; flex: none; }
.apps-row { display: flex; margin-left: 5px; flex: none; }
.app { position: relative; width: 40px; height: 39px; margin-right: 4px; display: flex; align-items: center; justify-content: center; border-radius: 4px; flex: none; }
.app svg { width: 24px; height: 24px; }
.app.focus { background: #eef3fc; box-shadow: 0 0 1px #a9b4c6; }
.app i { position: absolute; bottom: 0; left: 17px; width: 6px; height: 3px; border-radius: 2px; background: #7d8187; }
.app.focus i { left: 12px; width: 16px; background: #0f6cbd; }
.tray { margin-left: auto; display: flex; align-items: center; font-size: 12px; color: #1b1b1b; flex: none; }
.tray .t1 { margin-right: 16px; }
.tray .t2 { margin-right: 14px; }
.tray .t3 { margin-right: 21px; }
.lang { font-size: 11px; width: 20px; letter-spacing: 0; margin-right: 19px; }
.tray .t4 { margin-right: 8px; }
.tray .t5 { margin-right: 15px; }
.clock { display: flex; flex-direction: column; align-items: flex-end; width: 62px; line-height: 16px; font-size: 11.800px; letter-spacing: -.2px; white-space: nowrap; }
.tray .t6 { margin: 0 19px 0 8px; }
```
